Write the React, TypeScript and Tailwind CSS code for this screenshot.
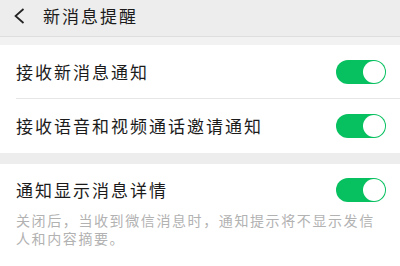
import React from 'react';

const font = { fontFamily: '"Noto Sans CJK SC", "Noto Sans", sans-serif' };

function Toggle() {
  return (
    <div className="w-[50px] h-[24px] rounded-full bg-[#07c160] flex items-center justify-end pr-[1.5px] shrink-0">
      <div className="w-[22px] h-[22px] rounded-full bg-white" />
    </div>
  );
}

function Row({ label, divider }: { label: string; divider?: boolean }) {
  return (
    <div className="pl-[16px]">
      <div
        className={`h-[54px] flex items-center justify-between pr-[14px] ${divider ? 'border-b border-[#e6e6e6]' : ''}`}
      >
        <span className="text-[17px] tracking-[2px] text-[#1b1b1b] leading-[24px]">{label}</span>
        <Toggle />
      </div>
    </div>
  );
}

export default function App() {
  return (
    <div className="w-[400px] h-[266px] overflow-hidden bg-white" style={font}>
      <div className="h-[37px] bg-[#ededed] border-b border-[#dedede] flex items-center pb-[4px]">
        <svg viewBox="0 0 12 16" className="w-[12px] h-[16px] ml-[13px]" fill="none" stroke="#222" strokeWidth="1.7">
          <path d="M10.5 1 L2.5 8 L10.5 15" />
        </svg>
        <span className="ml-[18px] text-[17px] tracking-[2px] text-[#1b1b1b] leading-[24px]">新消息提醒</span>
      </div>
      <div className="h-[8px] bg-[#f2f2f2]" />
      <Row label="接收新消息通知" divider />
      <Row label="接收语音和视频通话邀请通知" />
      <div className="h-[11px] bg-[#ededed]" />
      <div className="pl-[16px] pr-[14px] pt-[14px]">
        <div className="flex items-center justify-between">
          <span className="text-[17px] tracking-[2px] text-[#1b1b1b] leading-[24px]">通知显示消息详情</span>
          <Toggle />
        </div>
        <p className="mt-[9px] text-[14px] tracking-[1.6px] leading-[18px] text-[#b2b2b2]">
          关闭后，当收到微信消息时，通知提示将不显示发信人和内容摘要。
        </p>
      </div>
    </div>
  );
}
